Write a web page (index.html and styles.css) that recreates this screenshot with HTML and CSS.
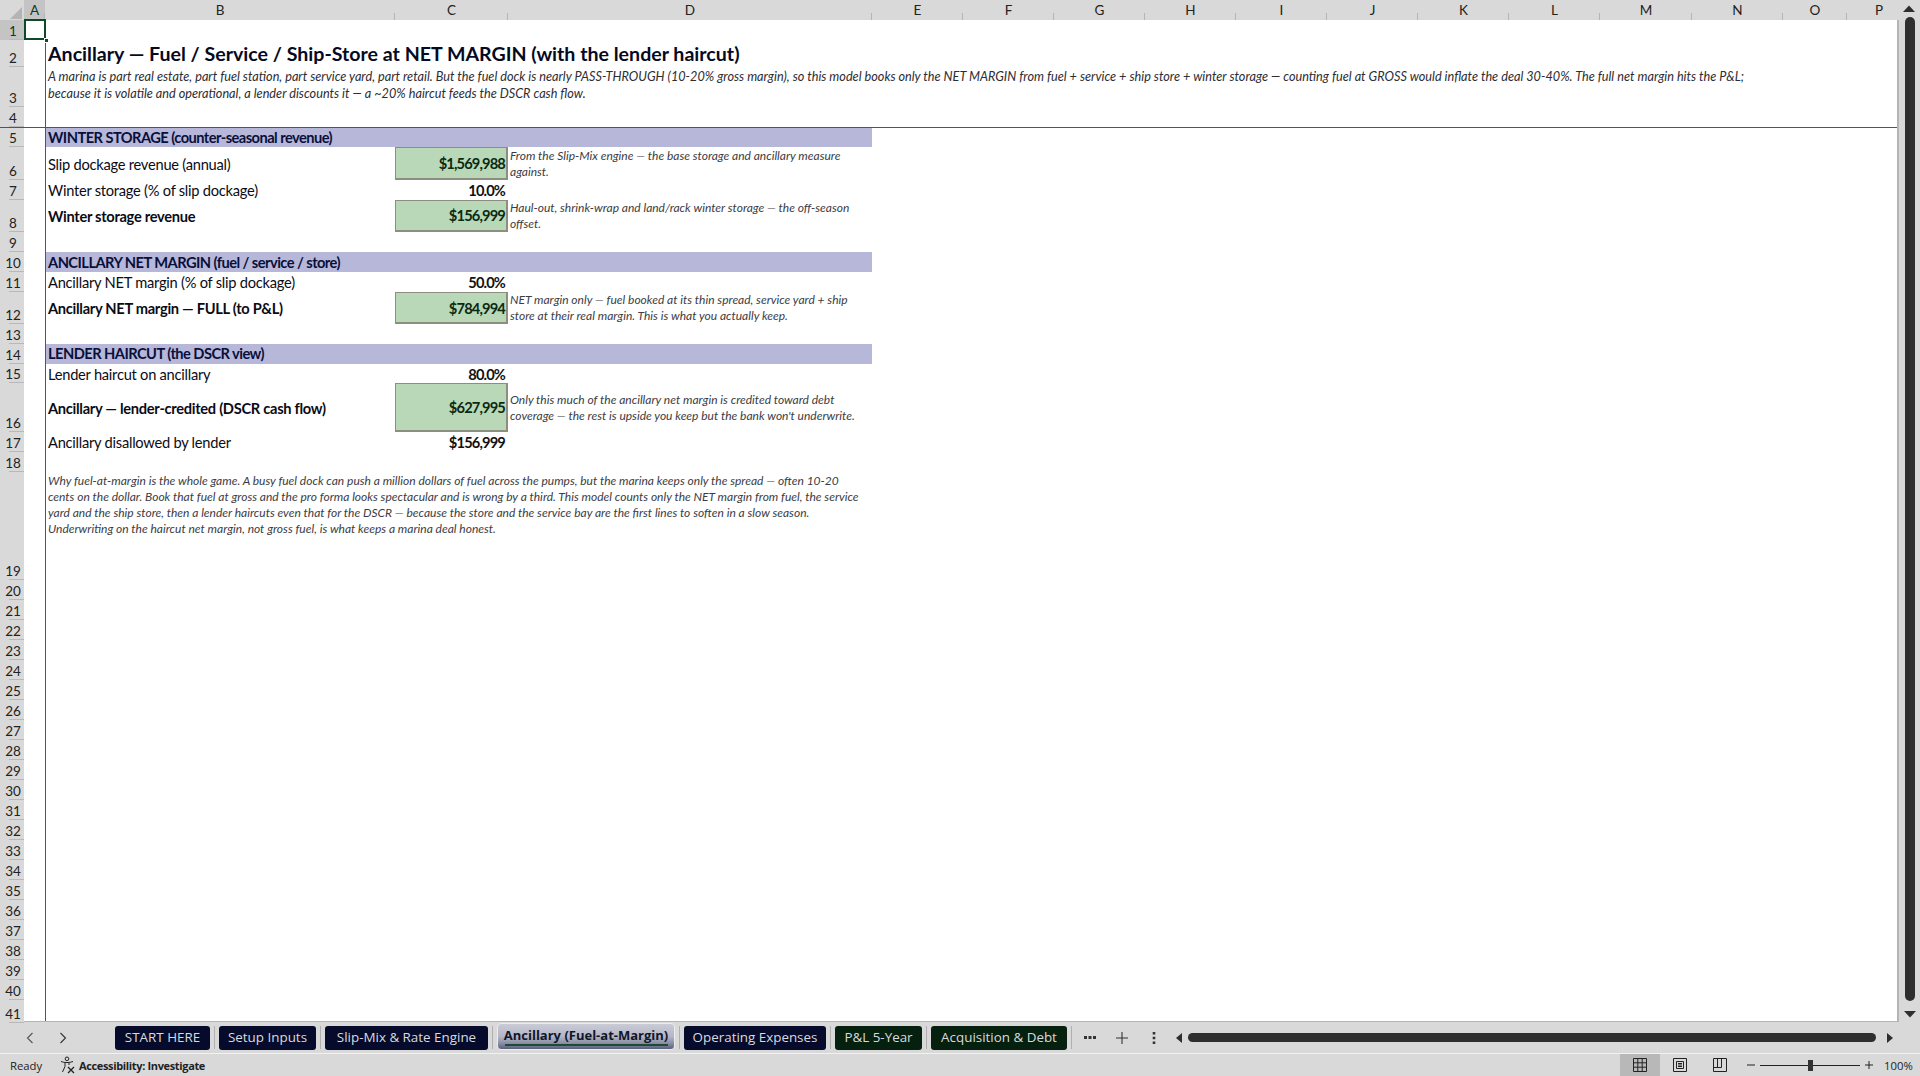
FILE: index.html
```html
<!DOCTYPE html>
<html lang="en">
<head>
<meta charset="utf-8">
<title>Ancillary (Fuel-at-Margin)</title>
<link rel="stylesheet" href="styles.css">
</head>
<body>
<div class="app">
  <div class="colhead">
    <div class="corner"><svg width="16" height="16" viewBox="0 0 16 16"><path d="M15 3V15H3Z" fill="#b4b4b4"/></svg></div>
    <div class="ch sel">A</div><div class="ch">B</div><div class="ch">C</div><div class="ch">D</div><div class="ch">E</div><div class="ch">F</div><div class="ch">G</div><div class="ch">H</div><div class="ch">I</div><div class="ch">J</div><div class="ch">K</div><div class="ch">L</div><div class="ch">M</div><div class="ch">N</div><div class="ch">O</div><div class="ch clip">P</div>
    <div class="vtop"><svg width="14" height="10" viewBox="0 0 14 10"><path d="M7 1.5 13 8H1Z" fill="#2e2e2e"/></svg></div>
  </div>
  <div class="body">
    <div class="rowhead">
      <div class="rh sel">1</div><div class="rh">2</div><div class="rh">3</div><div class="rh">4</div><div class="rh">5</div><div class="rh">6</div><div class="rh">7</div><div class="rh">8</div><div class="rh">9</div><div class="rh">10</div><div class="rh">11</div><div class="rh">12</div><div class="rh">13</div><div class="rh">14</div><div class="rh">15</div><div class="rh">16</div><div class="rh">17</div><div class="rh">18</div><div class="rh">19</div><div class="rh">20</div><div class="rh">21</div><div class="rh">22</div><div class="rh">23</div><div class="rh">24</div><div class="rh">25</div><div class="rh">26</div><div class="rh">27</div><div class="rh">28</div><div class="rh">29</div><div class="rh">30</div><div class="rh">31</div><div class="rh">32</div><div class="rh">33</div><div class="rh">34</div><div class="rh">35</div><div class="rh">36</div><div class="rh">37</div><div class="rh">38</div><div class="rh">39</div><div class="rh">40</div><div class="rh">41</div>
    </div>
    <div class="sheet">
      <div class="active"><span class="handle"></span></div>
      <div class="title">Ancillary — Fuel / Service / Ship-Store at NET MARGIN (with the lender haircut)</div>
      <div class="intro">A marina is part real estate, part fuel station, part service yard, part retail. But the fuel dock is nearly PASS-THROUGH (10-20% gross margin), so this model books only the NET MARGIN from fuel + service + ship store + winter storage — counting fuel at GROSS would inflate the deal 30-40%. The full net margin hits the P&amp;L;<br>because it is volatile and operational, a lender discounts it — a ~20% haircut feeds the DSCR cash flow.</div>
      <div class="freeze-h"></div>

      <div class="section r5">WINTER STORAGE (counter-seasonal revenue)</div>
      <div class="label r6">Slip dockage revenue (annual)</div>
      <div class="calc r6">$1,569,988</div>
      <div class="note r6">From the Slip-Mix engine — the base storage and ancillary measure<br>against.</div>
      <div class="label r7">Winter storage (% of slip dockage)</div>
      <div class="val r7">10.0%</div>
      <div class="label strong r8">Winter storage revenue</div>
      <div class="calc r8">$156,999</div>
      <div class="note r8">Haul-out, shrink-wrap and land/rack winter storage — the off-season<br>offset.</div>

      <div class="section r10">ANCILLARY NET MARGIN (fuel / service / store)</div>
      <div class="label r11">Ancillary NET margin (% of slip dockage)</div>
      <div class="val r11">50.0%</div>
      <div class="label strong r12">Ancillary NET margin — FULL (to P&amp;L)</div>
      <div class="calc r12">$784,994</div>
      <div class="note r12">NET margin only — fuel booked at its thin spread, service yard + ship<br>store at their real margin. This is what you actually keep.</div>

      <div class="section r14">LENDER HAIRCUT (the DSCR view)</div>
      <div class="label r15">Lender haircut on ancillary</div>
      <div class="val r15">80.0%</div>
      <div class="label strong r16">Ancillary — lender-credited (DSCR cash flow)</div>
      <div class="calc r16">$627,995</div>
      <div class="note r16">Only this much of the ancillary net margin is credited toward debt<br>coverage — the rest is upside you keep but the bank won't underwrite.</div>
      <div class="label r17">Ancillary disallowed by lender</div>
      <div class="val r17">$156,999</div>
      <div class="essay">Why fuel-at-margin is the whole game. A busy fuel dock can push a million dollars of fuel across the pumps, but the marina keeps only the spread — often 10-20<br>cents on the dollar. Book that fuel at gross and the pro forma looks spectacular and is wrong by a third. This model counts only the NET margin from fuel, the service<br>yard and the ship store, then a lender haircuts even that for the DSCR — because the store and the service bay are the first lines to soften in a slow season.<br>Underwriting on the haircut net margin, not gross fuel, is what keeps a marina deal honest.</div>
    </div>
    <div class="vscroll">
      <div class="vthumb"></div>
      <svg class="varrow" width="14" height="10" viewBox="0 0 14 10"><path d="M7 8.5 13 2H1Z" fill="#2e2e2e"/></svg>
    </div>
  </div>
  <div class="tabbar">
    <div class="nav">
      <svg width="10" height="14" viewBox="0 0 10 14"><path d="M7.5 2 2.5 7l5 5" fill="none" stroke="#555" stroke-width="1.1"/></svg>
      <svg width="10" height="14" viewBox="0 0 10 14"><path d="M2.5 2 7.5 7l-5 5" fill="none" stroke="#333" stroke-width="1.1"/></svg>
    </div>
    <div class="tabs">
      <div class="tab navy w1">START HERE</div><i class="sep"></i>
      <div class="tab navy w2">Setup Inputs</div><i class="sep"></i>
      <div class="tab navy w3">Slip-Mix &amp; Rate Engine</div><i class="sep"></i>
      <div class="tab current w4">Ancillary (Fuel-at-Margin)</div><i class="sep"></i>
      <div class="tab navy w5">Operating Expenses</div><i class="sep"></i>
      <div class="tab green w6">P&amp;L 5-Year</div><i class="sep"></i>
      <div class="tab green w7">Acquisition &amp; Debt</div><i class="sep"></i>
    </div>
    <div class="tabtools">
      <svg width="14" height="6" viewBox="0 0 14 6"><path d="M1 1h3v3H1zM5.5 1h3v3h-3zM10 1h3v3h-3z" fill="#333"/></svg>
      <svg width="14" height="14" viewBox="0 0 14 14"><path d="M7 1v12M1 7h12" stroke="#333" stroke-width="1.1"/></svg>
      <svg width="4" height="14" viewBox="0 0 4 14"><path d="M.7 1h2.6v2.6H.7zM.7 5.7h2.6v2.6H.7zM.7 10.4h2.6V13H.7z" fill="#333"/></svg>
    </div>
    <div class="hscroll">
      <svg width="8" height="12" viewBox="0 0 8 12"><path d="M1 6 7 1v10Z" fill="#2e2e2e"/></svg>
      <div class="hthumb"></div>
      <svg width="8" height="12" viewBox="0 0 8 12"><path d="M7 6 1 1v10Z" fill="#2e2e2e"/></svg>
    </div>
  </div>
  <div class="status">
    <span class="ready">Ready</span>
    <svg class="a11y" width="16" height="18" viewBox="0 0 16 18"><g fill="none" stroke="#222" stroke-width="1"><circle cx="7" cy="2.8" r="1.8"/><path d="M1 5.5c3 1.4 9 1.4 12 0M5 7v3.5L2.5 16M9 7v2"/><path d="M8 11l6 6M14 11l-6 6" stroke-width="1.3"/></g></svg>
    <span class="a11y-text">Accessibility: Investigate</span>
    <div class="views">
      <div class="view on"><svg width="14" height="14" viewBox="0 0 14 14"><path d="M.5.5h13v13H.5zM.5 4.8h13M.5 9.2h13M4.8.5v13M9.2.5v13" fill="none" stroke="#222"/></svg></div>
      <div class="view"><svg width="14" height="14" viewBox="0 0 14 14"><path d="M.5.5h13v13H.5zM3.5 3.5h7v7h-7zM5 5.5h4M5 7h4M5 8.5h4" fill="none" stroke="#222"/></svg></div>
      <div class="view"><svg width="14" height="14" viewBox="0 0 14 14"><path d="M.5.5h13v13H.5zM.5 9.5h8V.5M4.5.5v9" fill="none" stroke="#222"/></svg></div>
    </div>
    <div class="zoom">
      <svg width="8" height="8" viewBox="0 0 8 8"><path d="M0 4h8" stroke="#222"/></svg>
      <div class="slider"><span class="knob"></span></div>
      <svg width="8" height="8" viewBox="0 0 8 8"><path d="M0 4h8M4 0v8" stroke="#222"/></svg>
      <span class="pct">100%</span>
    </div>
  </div>
</div>
</body>
</html>
```
FILE: styles.css
```css
* { box-sizing: border-box; }
html, body { margin: 0; height: 100%; overflow: hidden; }
body { font-family: Lato, "Open Sans", sans-serif; color: #000; background: #d9d9d9; }
.app { width: 1920px; height: 1076px; display: flex; flex-direction: column; }

/* column header */
.colhead {
  height: 20px; flex: none; display: grid; background: #d9d9d9;
  grid-template-columns: 24px 21px 350px 113px 364px 91px 91px 91px 91px 91px 91px 91px 91px 92px 91px 64px 51px 22px;
}
.corner { display: flex; align-items: flex-end; justify-content: flex-end; border-bottom: 2px solid #6a6a6a; padding: 0 1px 1px 0; }
.ch {
  font-size: 13.5px; line-height: 21px; text-align: center; color: #222;
  border-bottom: 2px solid #6a6a6a; position: relative;
}
.ch::after { content: ""; position: absolute; right: 0; bottom: 0; width: 1px; height: 8px; background: #b5b5b5; }
.ch.sel { background: #c4c4c4; color: #0d3d25; }
.ch.clip { padding-left: 13px; }
.ch.clip::after { display: none; }
.vtop { display: flex; justify-content: center; padding-top: 4px; }

/* main */
.body { flex: 1; min-height: 0; display: flex; }
.rowhead {
  width: 24px; flex: none; display: grid; background: #d9d9d9;
  grid-template-rows: 19.5px 27.5px 40px 20px 20px 33px 19.5px 32.5px 20px 20px 20px 32px 19.5px 20.5px 19px 49px 20px 20px 108px repeat(21, 20px) 23px;
}
.rh {
  font-size: 13.5px; color: #222; display: flex; align-items: flex-end; justify-content: center;
  padding: 0 0 0 2px; line-height: 17px; position: relative;
}
.rh::after { content: ""; position: absolute; left: 9px; right: 0; bottom: 0; height: 1px; background: #b8b8b8; }
.rh.sel { background: #c4c4c4; color: #0d3d25; }

.sheet {
  flex: none; width: 1875px; background: #fff; position: relative; color: #0b0b14;
  border-bottom: 1px solid #b4b4b4; border-right: 2px solid #b4b4b4;
  display: grid;
  grid-template-columns: 21px 350px 113px 364px 1fr;
  grid-template-rows: 19.5px 27.5px 40px 20px 20px 33px 19.5px 32.5px 20px 20px 20px 32px 19.5px 20.5px 19px 49px 20px 20px 108px 1fr;
}
.sheet::before { content: ""; position: absolute; left: 21px; top: 0; bottom: 0; width: 1px; background: #555; }
.active {
  grid-area: 1 / 1; border: 2px solid #0f4a28; margin: -1px -1px 0 0; position: relative; z-index: 2;
}
.handle { position: absolute; right: -5px; bottom: -5px; width: 5px; height: 5px; background: #0f4a28; border: 1px solid #fff; }
.title { grid-area: 2 / 2 / 2 / 6; font-size: 19.6px; font-weight: 700; align-self: end; padding: 0 0 1px 3px; white-space: nowrap; line-height: 24px; color: #050a1e; }
.intro { grid-area: 3 / 2 / 3 / 6; font-size: 12.7px; font-style: italic; line-height: 17px; color: #2d2d33; white-space: nowrap; padding: 1px 0 0 3px; align-self: start; }
.freeze-h { grid-area: 5 / 1 / 5 / 7; align-self: start; height: 1px; background: #555; margin-left: -24px; width: 1897px; position: relative; z-index: 1; }

.r5 { grid-row: 5; } .r6 { grid-row: 6; } .r7 { grid-row: 7; } .r8 { grid-row: 8; }
.r10 { grid-row: 10; } .r11 { grid-row: 11; } .r12 { grid-row: 12; }
.r14 { grid-row: 14; } .r15 { grid-row: 15; } .r16 { grid-row: 16; } .r17 { grid-row: 17; }

.section {
  grid-column: 2 / 5; background: #b7b7da; color: #08103a; font-size: 14.67px; font-weight: 700; letter-spacing: -.55px;
  display: flex; align-items: center; padding: 0 0 0 3px; white-space: nowrap;
}
.label { grid-column: 2; font-size: 14.67px; letter-spacing: -.25px; display: flex; align-items: center; padding: 1px 0 0 3px; white-space: nowrap; }
.label.strong { font-weight: 700; letter-spacing: -.3px; }
.val { grid-column: 3; font-size: 14.67px; font-weight: 700; letter-spacing: -.85px; display: flex; align-items: center; justify-content: flex-end; padding: 1px 3px 0 0; color: #111; }
.calc {
  grid-column: 3; background: #b9d8b7; border: 1px solid #8d8d80; border-bottom-width: 2px; border-right-width: 2px; color: #0a2a14;
  font-size: 14.67px; font-weight: 700; letter-spacing: -.85px; display: flex; align-items: center; justify-content: flex-end; padding: 1px 1px 0 0;
}
.note { grid-column: 4; font-size: 12px; font-style: italic; line-height: 16px; color: #3c3c44; display: flex; align-items: center; padding-left: 2px; white-space: nowrap; }
.essay { grid-area: 19 / 2 / 19 / 5; font-size: 12px; font-style: italic; line-height: 16px; color: #3c3c44; white-space: nowrap; padding: 1px 0 0 3px; }

.vscroll { flex: 1; position: relative; display: flex; flex-direction: column; align-items: center; background: #d9d9d9; }
.vthumb { width: 10px; flex: 1; margin: -3px 0 21px; border-radius: 5px; background: #2e2e2e; }
.varrow { position: absolute; bottom: 3px; left: 4px; }

/* tabs */
.tabbar { height: 32px; flex: none; display: flex; align-items: center; background: #d9d9d9; border-bottom: 1px solid #f2f2f2; }
.nav { width: 115px; flex: none; display: flex; gap: 23px; padding-left: 25px; }
.tabs { display: flex; align-items: center; flex: none; }
.tab {
  height: 24px; border-radius: 3px; font-family: "Open Sans", sans-serif; font-size: 13.4px; line-height: 23px; text-align: center; color: #d8dade; white-space: nowrap;
}
.navy { background: #060b2b; }
.green { background: #06200f; }
.w1 { width: 95px; } .w2 { width: 97px; } .w3 { width: 163px; } .w4 { width: 178px; } .w5 { width: 142px; } .w6 { width: 87px; } .w7 { width: 136px; }
.current {
  height: 27px; margin-top: -2px; color: #10162a; font-size: 13px; font-weight: 700; line-height: 22px; position: relative;
  background: linear-gradient(#c9cbd6 0%, #b4b6c6 50%, #8e92a8 75%, #5a5f7a 100%); border: 1px solid #ececec; border-radius: 4px;
}
.current::after { content: ""; position: absolute; left: 7px; right: 6px; bottom: 3px; height: 2px; background: #1d4a33; }
.sep { width: 1px; height: 23px; background: #b0b0b0; margin: 0 4px; flex: none; }
.tabtools { display: flex; align-items: center; gap: 18px; margin-left: 7px; }
.tabtools svg:last-child { margin-left: 5px; }
.hscroll { display: flex; align-items: center; gap: 1px; margin-left: 19px; width: 719px; }
.hthumb { flex: 1; height: 9px; border-radius: 4.5px; background: #2e2e2e; margin: 0 9px 0 4px; }

/* status */
.status { height: 22px; flex: none; display: flex; align-items: center; background: #d9d9d9; font-family: "Open Sans", sans-serif; font-size: 11.3px; color: #222; }
.ready { margin-left: 10px; width: 50px; }
.a11y { flex: none; }
.a11y-text { font-size: 11px; font-weight: 700; margin-left: 3px; white-space: nowrap; letter-spacing: -.35px; }
.views { display: flex; margin-left: auto; height: 100%; }
.view { width: 40px; display: flex; align-items: center; justify-content: center; }
.view.on { background: #b8b8b8; }
.zoom { display: flex; align-items: center; gap: 5px; margin: 0 8px 0 7px; }
.slider { width: 100px; height: 1px; background: #222; position: relative; }
.knob { position: absolute; left: 48px; top: -5px; width: 5px; height: 11px; background: #333; }
.pct { margin-left: 6px; width: 28px; }
```
